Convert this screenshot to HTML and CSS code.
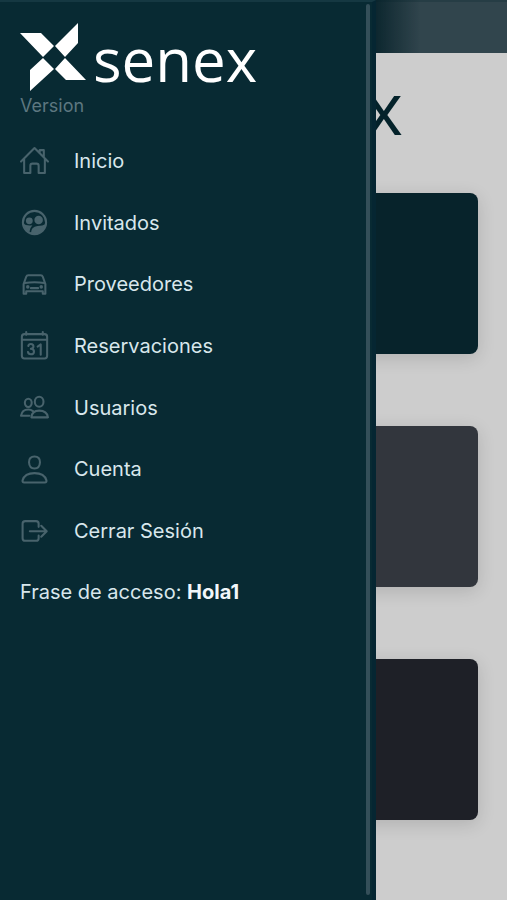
FILE: index.html
```html
<!DOCTYPE html>
<html lang="es">
<head>
<meta charset="utf-8">
<meta name="viewport" content="width=device-width, initial-scale=1">
<title>Senex</title>
<link rel="stylesheet" href="styles.css">
</head>
<body>
<main class="page">
  <header class="toolbar"></header>
  <div class="content">
    <div class="brand brand-large">
      <span class="wordmark">x</span>
    </div>
    <section class="cards">
      <div class="card card-teal"></div>
      <div class="card card-slate"></div>
      <div class="card card-ink"></div>
    </section>
  </div>
</main>

<aside class="drawer">
  <div class="brand">
    <svg class="mark" viewBox="0 0 66 68" aria-hidden="true"><path d="M0 10H21L34 23L23 34ZM58 0V20L45 34L35 23ZM23 35L34 46L10 68V47ZM45 35L66 57H46L35 46Z"/></svg>
    <span class="wordmark">senex</span>
  </div>
  <p class="version">Version</p>
  <nav class="menu">
    <a class="item" href="#inicio">
      <svg class="icon" viewBox="0 0 28 28"><path d="M1 15L14 2L27 15M19 7V4H23V11M4 12V26H10V19Q10 17 12 17H16Q18 17 18 19V26H24V12"/></svg>
      Inicio
    </a>
    <a class="item" href="#invitados">
      <svg class="icon" viewBox="0 0 28 28"><circle cx="14" cy="14" r="11.2"/><g class="solid"><circle cx="9" cy="12.4" r="3.3"/><circle cx="18" cy="11.6" r="4.1"/><path d="M3 15Q6 17.500 12 16.700Q9.500 19 9 23.500Q4 21 3 15ZM10.500 24.500Q10.500 18 17 17.300Q22 17.300 25 15.500Q24 23 17 25.500Q13 26 10.500 24.500Z"/></g></svg>
      Invitados
    </a>
    <a class="item" href="#proveedores">
      <svg class="icon" viewBox="0 0 28 28"><path d="M3.500 13.500L6 6.500Q6.500 5 8 5H20Q21.500 5 22 6.500L24.500 13.500V23H22V20.500H6V23H3.500ZM4.500 12.500Q14 11 23.500 12.500M10.500 17.500H17.500"/><g class="solid"><circle cx="7.500" cy="16.300" r="1.700"/><circle cx="20.500" cy="16.300" r="1.700"/></g></svg>
      Proveedores
    </a>
    <a class="item" href="#reservaciones">
      <svg class="icon" viewBox="0 0 28 28"><rect x="1.800" y="3" width="24.400" height="23.500" rx="2.500"/><path d="M2 8.500H26M6 1V3.500M22 1V3.500M8 14.500Q8.300 12.500 10.500 12.500Q13 12.500 13 15Q13 17 10.500 17.200Q13.500 17.400 13.500 20Q13.500 22.500 10.500 22.500Q8 22.500 7.700 20.200M17 15L20 13V23"/></svg>
      Reservaciones
    </a>
    <a class="item" href="#usuarios">
      <svg class="icon" viewBox="0 0 28 28"><ellipse cx="18.500" cy="8.500" rx="4.200" ry="4.800"/><ellipse cx="8" cy="9.500" rx="3.300" ry="4"/><path d="M11 23.500Q11.500 17 18.500 17Q26 17 27 23.500ZM12.500 17.500Q10.500 16 8 16Q2 16 1 22H9"/></svg>
      Usuarios
    </a>
    <a class="item" href="#cuenta">
      <svg class="icon" viewBox="0 0 28 28"><path d="M14 1.500Q19.300 1.500 19.300 7Q19 13 14 13Q9 13 8.700 7Q8.700 1.500 14 1.500ZM4 26.500Q2 26.500 2.500 24.500Q4.500 17.500 14 17.500Q23.500 17.500 25.500 24.500Q26 26.500 24 26.500Z"/></svg>
      Cuenta
    </a>
    <a class="item" href="#salir">
      <svg class="icon" viewBox="0 0 28 28"><path d="M18 9.500V6.500Q18 4 15.500 4H5Q2.500 4 2.500 6.500V20.500Q2.500 23 5 23H15.500Q18 23 18 20.500V18M9.500 13.700H25.500M20.500 8.500L25.800 13.700L20.500 19"/></svg>
      Cerrar Sesión
    </a>
  </nav>
  <p class="phrase">Frase de acceso: <strong>Hola1</strong></p>
  <span class="thumb"></span>
</aside>
</body>
</html>
```
FILE: styles.css
```css
* {
  box-sizing: border-box;
}

body {
  margin: 0;
  min-height: 100vh;
  background: #cdcdcd;
  font-family: Inter, "Liberation Sans", sans-serif;
  font-size: 20px;
  line-height: 24px;
  overflow: hidden;
}

p {
  margin: 0;
}

.toolbar {
  height: 53px;
  background: #31454d;
  border-top: 2px solid #263d45;
}

.content {
  padding: 8px 29px 29px;
}

.brand {
  display: flex;
  align-items: flex-start;
  gap: 7px;
  height: 68px;
  color: #fff;
}

.mark {
  flex: none;
  width: 66px;
  height: 68px;
  fill: currentColor;
}

.wordmark {
  font-family: "Open Sans", "Noto Sans", sans-serif;
  font-size: 60px;
  line-height: 72px;
}

.brand-large {
  justify-content: flex-end;
  height: 132px;
  padding-right: 75px;
  color: #04222a;
}

.brand-large .wordmark {
  font-size: 73px;
  font-weight: 500;
  line-height: 92px;
}

.cards {
  display: grid;
  gap: 72px;
}

.card {
  height: 161px;
  border-radius: 8px;
  box-shadow: 0 4px 18px rgba(0, 0, 0, 0.14);
}

.card-teal {
  background: #07232b;
}

.card-slate {
  background: #32363d;
}

.card-ink {
  background: #1e2027;
}

.drawer {
  position: fixed;
  top: 0;
  bottom: 0;
  left: 0;
  width: 376px;
  max-width: 80vw;
  padding: 21px 20px;
  background: #082a33;
  border-top: 2px solid #153842;
  border-right: 4px solid #052632;
  color: #d8e7ec;
}

.drawer::after {
  content: "";
  position: absolute;
  top: -2px;
  left: calc(100% + 4px);
  width: 44px;
  height: 53px;
  background: linear-gradient(to right, rgba(4, 32, 40, 0.8), rgba(4, 32, 40, 0));
}

.version {
  margin-top: 3px;
  font-size: 18px;
  color: #5d7780;
}

.menu {
  display: grid;
  grid-auto-rows: 1fr;
  min-height: 432px;
  margin-top: 12px;
}

.item {
  display: flex;
  align-items: center;
  gap: 25px;
  color: inherit;
  text-decoration: none;
}

.icon {
  flex: none;
  width: 29px;
  height: 29px;
  fill: none;
  stroke: #48636c;
  stroke-width: 2;
  stroke-linejoin: round;
  stroke-linecap: round;
}

.solid {
  fill: #48636c;
  stroke: none;
}

.phrase {
  margin-top: 18px;
}

.phrase strong {
  color: #f1f7fa;
}

.thumb {
  position: absolute;
  top: 2px;
  right: 2px;
  bottom: 5px;
  width: 4px;
  border-radius: 2px;
  background: #344f59;
}
```
